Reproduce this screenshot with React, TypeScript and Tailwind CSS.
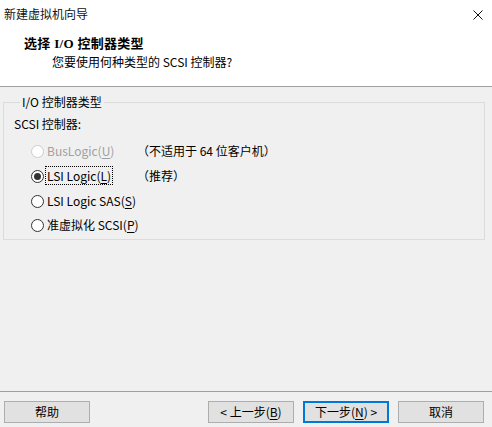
import React, { useState } from 'react'

const options = [
  { id: 'bus', label: 'BusLogic(', key: 'U', note: '（不适用于 64 位客户机）', disabled: true, mt: 'mt-0' },
  { id: 'lsi', label: 'LSI Logic(', key: 'L', note: '（推荐）', disabled: false, mt: 'mt-[9px]' },
  { id: 'sas', label: 'LSI Logic SAS(', key: 'S', note: '', disabled: false, mt: 'mt-[9px]' },
  { id: 'pv', label: '准虚拟化 SCSI(', key: 'P', note: '', disabled: false, mt: 'mt-[8px]' },
]

function Radio({ checked, disabled }: { checked: boolean; disabled: boolean }) {
  return (
    <span
      className={`flex h-[13px] w-[13px] shrink-0 items-center justify-center rounded-full border bg-white ${
        disabled ? 'border-[#cccccc]' : 'border-[#333333]'
      }`}
    >
      {checked && <span className="h-[7px] w-[7px] rounded-full bg-[#333333]" />}
    </span>
  )
}

function Button({ children, primary }: { children: React.ReactNode; primary?: boolean }) {
  return (
    <button
      className={`flex h-[22px] w-[86px] items-center justify-center bg-[#e1e1e1] text-[12px] leading-none text-black ${
        primary ? 'border-2 border-[#0078d7]' : 'border border-[#adadad]'
      }`}
    >
      {children}
    </button>
  )
}

export default function App() {
  const [selected, setSelected] = useState('lsi')

  return (
    <div className="flex h-[427px] w-[492px] flex-col bg-[#f0f0f0] font-['Noto_Sans_CJK_SC',sans-serif] text-[12px] text-black">
      {/* title + header */}
      <div className="flex h-[86px] flex-col bg-white">
        <div className="flex h-[30px] items-start justify-between pl-[4px] pr-[9px] pt-[6px]">
          <span className="leading-[16px] text-[#111]">新建虚拟机向导</span>
          <svg width="10" height="10" viewBox="0 0 10 10" className="mt-[4px]">
            <path d="M0.5 0.5L9.5 9.5M9.5 0.5L0.5 9.5" stroke="#111" strokeWidth="1" />
          </svg>
        </div>
        <div className="pl-[24px] pt-[6px] font-['Liberation_Serif','Noto_Sans_CJK_SC',serif] text-[13px] font-bold leading-[16px] tracking-[0.3px]">
          选择 I/O 控制器类型
        </div>
        <div className="pl-[52px] pt-[2px] leading-[16px]">您要使用何种类型的 SCSI 控制器?</div>
      </div>
      <div className="h-px bg-[#a0a0a0]" />

      {/* body */}
      <div className="flex-1 px-[3px] pt-[7px]">
        <fieldset className="h-[146px] w-[482px] border border-[#dcdcdc] pl-[10px]">
          <legend className="ml-[6px] px-[2px] leading-[16px]">I/O 控制器类型</legend>
          <div className="mt-[6px] leading-[16px]">SCSI 控制器:</div>
          <div className="mt-[11px] flex flex-col pl-[17px]">
            {options.map((o) => (
              <div
                key={o.id}
                className={`flex h-[16px] items-center ${o.mt}`}
                onClick={() => !o.disabled && setSelected(o.id)}
              >
                <Radio checked={selected === o.id} disabled={o.disabled} />
                <span className="ml-[2px] w-[91px] shrink-0 whitespace-nowrap">
                  <span
                    className={`px-px leading-[14px] ${o.disabled ? 'text-[#a0a0a0]' : ''} ${
                      selected === o.id ? 'outline-1 outline-dotted outline-black' : 'outline-none'
                    }`}
                  >
                    {o.label}
                    <span className="underline underline-offset-2">{o.key}</span>)
                  </span>
                </span>
                {o.note && <span className="leading-[16px]">{o.note}</span>}
              </div>
            ))}
          </div>
        </fieldset>
      </div>

      {/* footer */}
      <div className="h-px bg-[#a0a0a0]" />
      <div className="flex h-[35px] items-start justify-between pl-[4px] pr-[8px] pt-[9px]">
        <Button>帮助</Button>
        <div className="flex gap-[9px]">
          <Button>
            &lt; 上一步(<span className="underline underline-offset-2">B</span>)
          </Button>
          <Button primary>
            下一步(<span className="underline underline-offset-2">N</span>) &gt;
          </Button>
          <Button>取消</Button>
        </div>
      </div>
    </div>
  )
}
